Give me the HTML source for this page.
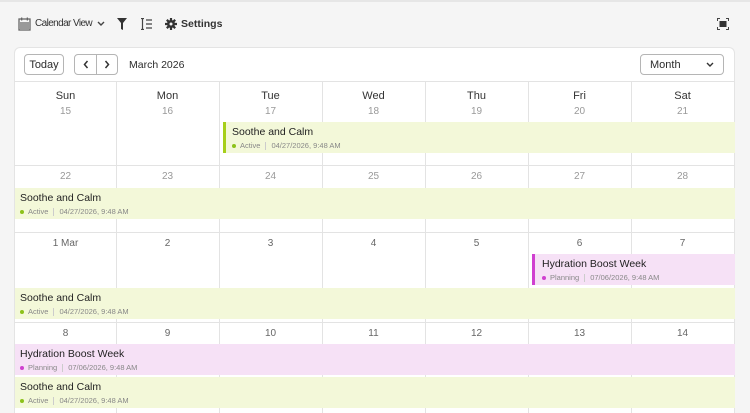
<!DOCTYPE html>
<html><head><meta charset="utf-8"><style>
*{box-sizing:border-box;margin:0;padding:0}
body{width:750px;height:413px;overflow:hidden;background:#f5f5f5;font-family:"Liberation Sans",sans-serif;color:#2c2c2c;position:relative}
.a{position:absolute}
.card{left:14px;top:47px;width:721px;height:366px;background:#fff;border:1px solid #e4e4e4;border-bottom:none;border-radius:6px 6px 0 0}
.btn{border:1px solid #b5b5b5;border-radius:4px;background:#fff;font-size:11px;display:flex;align-items:center;justify-content:center}
.vl{width:1px;background:#e3e3e3}
.hl{height:1px;background:#e3e3e3;left:14px;width:721px}
.dn{font-size:11px;color:#333;text-align:center;width:103px}
.dt{font-size:10px;color:#999;text-align:center;width:103px}
.ev{height:31px;padding:4px 0 0 5px}
.ev .t{font-size:10.5px;color:#222}
.ev .s{font-size:7.5px;color:#888;margin-top:3px;display:flex;align-items:center}
.dot{width:4px;height:4px;border-radius:50%;display:inline-block;margin-right:4px}
.sep{display:inline-block;width:1px;height:8px;background:#ccc;margin:0 5px}
.g{background:#f3f8d9}.p{background:#f6e1f6}
</style></head><body>
<div class="a" style="left:0;top:0;width:750px;height:2px;background:#e6e6e6"></div>
<svg class="a" style="left:18px;top:17px" width="13" height="14" viewBox="0 0 13 14"><rect x="1" y="2" width="11" height="11" fill="none" stroke="#666" stroke-width="1.3"/><rect x="2" y="5" width="9" height="7" fill="#999"/><rect x="3" y="0.5" width="1.3" height="3" fill="#666"/><rect x="8.7" y="0.5" width="1.3" height="3" fill="#666"/></svg>
<div class="a" style="left:35px;top:18px;font-size:10px;letter-spacing:-0.6px;color:#333;white-space:nowrap">Calendar View</div>
<svg class="a" style="left:97px;top:21px" width="8" height="6" viewBox="0 0 8 6"><path d="M1 1l3 3 3-3" fill="none" stroke="#444" stroke-width="1.4"/></svg>
<svg class="a" style="left:117px;top:18px" width="10" height="12" viewBox="0 0 10 12"><path d="M0 0h10L6 5v7L4 11V5z" fill="#333"/></svg>
<svg class="a" style="left:140px;top:18px" width="12" height="12" viewBox="0 0 12 12"><path d="M1 0.5h3M2.5 .5v11M1 11.5h3M6 2h6M6 6h6M6 10h6" stroke="#444" stroke-width="1.2" fill="none"/></svg>
<svg class="a" style="left:165px;top:18px" width="12" height="12" viewBox="0 0 12 12"><circle cx="6" cy="6" r="4" fill="#333"/><path d="M6 0v12M0 6h12M1.8 1.8l8.4 8.4M10.2 1.8l-8.4 8.4" stroke="#333" stroke-width="2.2"/><circle cx="6" cy="6" r="1.5" fill="#f5f5f5"/></svg>
<div class="a" style="left:181px;top:18px;font-size:10.5px;font-weight:bold;color:#333">Settings</div>
<svg class="a" style="left:717px;top:18px" width="12" height="12" viewBox="0 0 12 12"><path d="M0.5 3V.5H3M9 .5h2.5V3M11.5 9v2.5H9M3 11.5H.5V9" fill="none" stroke="#444"/><rect x="2.5" y="3" width="7" height="6" fill="#333"/></svg>
<div class="a card"></div>
<div class="a btn" style="left:24px;top:54px;width:40px;height:21px">Today</div>
<div class="a btn" style="left:74px;top:54px;width:44px;height:21px"></div>
<div class="a" style="left:96px;top:54px;width:1px;height:21px;background:#b5b5b5"></div>
<svg class="a" style="left:82px;top:60px" width="8" height="9" viewBox="0 0 8 9"><path d="M5.5 1L2.5 4.5 5.5 8" fill="none" stroke="#333" stroke-width="1.5"/></svg>
<svg class="a" style="left:103px;top:60px" width="8" height="9" viewBox="0 0 8 9"><path d="M2.5 1l3 3.5-3 3.5" fill="none" stroke="#333" stroke-width="1.5"/></svg>
<div class="a" style="left:129px;top:59px;font-size:10.5px">March 2026</div>
<div class="a btn" style="left:640px;top:54px;width:84px;height:21px;justify-content:space-between;padding:0 9px"><span>Month</span><svg width="8" height="6" viewBox="0 0 8 6"><path d="M1 1l3 3 3-3" fill="none" stroke="#333" stroke-width="1.4"/></svg></div>
<div class="a hl" style="top:81px"></div>
<div class="a hl" style="top:165px"></div>
<div class="a hl" style="top:232px"></div>
<div class="a hl" style="top:322px"></div>
<div class="a vl" style="left:116px;top:81px;height:332px"></div>
<div class="a vl" style="left:219px;top:81px;height:332px"></div>
<div class="a vl" style="left:322px;top:81px;height:332px"></div>
<div class="a vl" style="left:425px;top:81px;height:332px"></div>
<div class="a vl" style="left:528px;top:81px;height:332px"></div>
<div class="a vl" style="left:631px;top:81px;height:332px"></div>
<div class="a dn" style="left:14px;top:90px">Sun</div><div class="a dn" style="left:116px;top:90px">Mon</div><div class="a dn" style="left:219px;top:90px">Tue</div><div class="a dn" style="left:322px;top:90px">Wed</div><div class="a dn" style="left:425px;top:90px">Thu</div><div class="a dn" style="left:528px;top:90px">Fri</div><div class="a dn" style="left:631px;top:90px">Sat</div>
<div class="a dt" style="left:14px;top:106px">15</div><div class="a dt" style="left:116px;top:106px">16</div><div class="a dt" style="left:219px;top:106px">17</div><div class="a dt" style="left:322px;top:106px">18</div><div class="a dt" style="left:425px;top:106px">19</div><div class="a dt" style="left:528px;top:106px">20</div><div class="a dt" style="left:631px;top:106px">21</div>
<div class="a dt" style="left:14px;top:171px">22</div><div class="a dt" style="left:116px;top:171px">23</div><div class="a dt" style="left:219px;top:171px">24</div><div class="a dt" style="left:322px;top:171px">25</div><div class="a dt" style="left:425px;top:171px">26</div><div class="a dt" style="left:528px;top:171px">27</div><div class="a dt" style="left:631px;top:171px">28</div>
<div class="a dt" style="left:14px;top:238px;color:#666">1 Mar</div><div class="a dt" style="left:116px;top:238px;color:#666">2</div><div class="a dt" style="left:219px;top:238px;color:#666">3</div><div class="a dt" style="left:322px;top:238px;color:#666">4</div><div class="a dt" style="left:425px;top:238px;color:#666">5</div><div class="a dt" style="left:528px;top:238px;color:#666">6</div><div class="a dt" style="left:631px;top:238px;color:#666">7</div>
<div class="a dt" style="left:14px;top:328px;color:#666">8</div><div class="a dt" style="left:116px;top:328px;color:#666">9</div><div class="a dt" style="left:219px;top:328px;color:#666">10</div><div class="a dt" style="left:322px;top:328px;color:#666">11</div><div class="a dt" style="left:425px;top:328px;color:#666">12</div><div class="a dt" style="left:528px;top:328px;color:#666">13</div><div class="a dt" style="left:631px;top:328px;color:#666">14</div>

<div class="a ev g" style="left:223px;top:122px;width:512px;border-left:3px solid #a6cf1a;padding-left:6px"><div class="t">Soothe and Calm</div><div class="s"><span class="dot" style="background:#8cc21a"></span>Active<span class="sep"></span>04/27/2026, 9:48 AM</div></div>
<div class="a ev g" style="left:15px;top:188px;width:720px"><div class="t">Soothe and Calm</div><div class="s"><span class="dot" style="background:#8cc21a"></span>Active<span class="sep"></span>04/27/2026, 9:48 AM</div></div>
<div class="a ev p" style="left:532px;top:254px;width:203px;border-left:3px solid #d03fd0;padding-left:7px"><div class="t">Hydration Boost Week</div><div class="s"><span class="dot" style="background:#d040d0"></span>Planning<span class="sep"></span>07/06/2026, 9:48 AM</div></div>
<div class="a ev g" style="left:15px;top:288px;width:720px"><div class="t">Soothe and Calm</div><div class="s"><span class="dot" style="background:#8cc21a"></span>Active<span class="sep"></span>04/27/2026, 9:48 AM</div></div>
<div class="a ev p" style="left:15px;top:344px;width:720px"><div class="t">Hydration Boost Week</div><div class="s"><span class="dot" style="background:#d040d0"></span>Planning<span class="sep"></span>07/06/2026, 9:48 AM</div></div>
<div class="a ev g" style="left:15px;top:377px;width:720px"><div class="t">Soothe and Calm</div><div class="s"><span class="dot" style="background:#8cc21a"></span>Active<span class="sep"></span>04/27/2026, 9:48 AM</div></div>
</body></html>
